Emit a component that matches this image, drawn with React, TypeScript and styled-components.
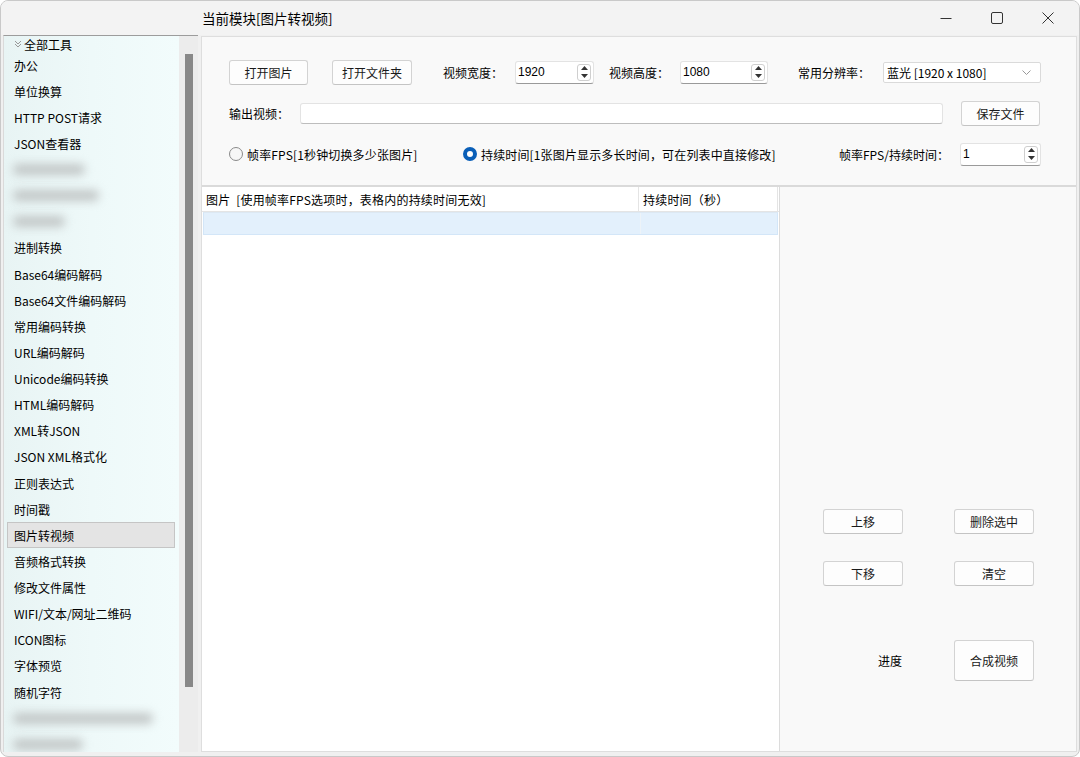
import styled, { createGlobalStyle } from "styled-components";

const GlobalStyle = createGlobalStyle`
  html, body {
    margin: 0;
    padding: 0;
    background: #ffffff;
  }
  body {
    font-family: "Noto Sans CJK SC", "Noto Sans", sans-serif;
    font-size: 12px;
    color: #000;
  }
`;

const Window = styled.div`
  width: 1078px;
  height: 755px;
  border: 1px solid #c9c9c9;
  border-radius: 8px;
  background: #f0f0f0;
  overflow: hidden;
  display: flex;
  flex-direction: column;
`;

const TitleBar = styled.div`
  height: 34px;
  flex: none;
  display: flex;
  align-items: center;
  background: #f3f3f3;
`;

const Title = styled.div`
  flex: 1;
  padding-left: 201px;
  font-size: 13.5px;
  line-height: 34px;
`;

const WinButton = styled.div`
  width: 51px;
  height: 34px;
  display: flex;
  align-items: center;
  justify-content: center;
`;

const Body = styled.div`
  flex: 1;
  display: flex;
  min-height: 0;
  padding: 0 2px 4px 2px;
`;

const Sidebar = styled.div`
  width: 194px;
  flex: none;
  display: flex;
  border-top: 1px solid #9c9c9c;
  border-left: 1px solid #dadada;
  overflow: hidden;
`;

const List = styled.div`
  flex: 1;
  padding: 0 3px 0 3px;
  background: linear-gradient(90deg, #e8f4f4 0%, #eef9f9 50%, #f2fcfc 100%);
  overflow: hidden;
`;

const TreeHeader = styled.div`
  height: 16px;
  display: flex;
  align-items: center;
  gap: 2px;
  padding-left: 7px;
  font-size: 12px;
`;

const Item = styled.div<{ $selected?: boolean }>`
  height: 26.125px;
  box-sizing: border-box;
  display: flex;
  align-items: center;
  padding-left: 6px;
  margin-right: 1px;
  white-space: nowrap;
  border: 1px solid ${(p) => (p.$selected ? "#c5c5c5" : "transparent")};
  background: ${(p) => (p.$selected ? "#e4e4e4" : "transparent")};
`;

const BlurredItem = styled.div<{ $w: number }>`
  height: 26.125px;
  display: flex;
  align-items: center;
  padding-left: 6px;
  & > span {
    display: block;
    width: ${(p) => p.$w}px;
    height: 11px;
    border-radius: 5px;
    background: #c2c7c7;
    filter: blur(5px);
  }
`;

const ScrollTrack = styled.div`
  width: 19px;
  flex: none;
  background: #ececec;
  padding-top: 18px;
  display: flex;
  justify-content: center;
`;

const ScrollThumb = styled.div`
  width: 8px;
  height: 633px;
  background: #888888;
`;

const Main = styled.div`
  flex: 1;
  margin-left: 3px;
  margin-top: 1px;
  border: 1px solid #dedede;
  background: #f9f9f9;
  display: flex;
  flex-direction: column;
  min-width: 0;
`;

const Controls = styled.div`
  height: 150px;
  flex: none;
  box-sizing: border-box;
  padding: 23px 0 0 27px;
  display: flex;
  flex-direction: column;
  gap: 17px;
  border-bottom: 2px solid #dadada;
`;

const Row = styled.div`
  height: 24px;
  display: flex;
  align-items: center;
`;

const Button = styled.button<{ $w?: number; $h?: number; $ml?: number }>`
  width: ${(p) => p.$w ?? 80}px;
  height: ${(p) => p.$h ?? 25}px;
  margin-left: ${(p) => p.$ml ?? 0}px;
  flex: none;
  font-family: inherit;
  font-size: 12px;
  color: #1a1a1a;
  background: #fdfdfd;
  border: 1px solid #d3d3d3;
  border-bottom-color: #c4c4c4;
  border-radius: 3px;
  padding: 0;
`;

const Label = styled.span<{ $w: number; $ml?: number }>`
  width: ${(p) => p.$w}px;
  margin-left: ${(p) => p.$ml ?? 0}px;
  flex: none;
  white-space: nowrap;
`;

const SpinBox = styled.div<{ $w: number; $ml?: number }>`
  width: ${(p) => p.$w}px;
  margin-left: ${(p) => p.$ml ?? 0}px;
  height: 23px;
  box-sizing: border-box;
  flex: none;
  display: flex;
  align-items: center;
  background: #fff;
  border: 1px solid #e3e3e3;
  border-bottom: 1px solid #9a9a9a;
  border-radius: 3px;
  padding-left: 2px;
  font-family: "Liberation Sans", "Noto Sans", sans-serif;
  font-size: 12px;
`;

const SpinValue = styled.span`
  flex: 1;
`;

const SpinArrows = styled.div`
  width: 14px;
  height: 17px;
  margin-right: 2px;
  box-sizing: border-box;
  border: 1px solid #cfcfcf;
  border-radius: 3px;
  display: flex;
  flex-direction: column;
  align-items: center;
  justify-content: space-around;
`;

const Select = styled.div`
  width: 158px;
  height: 21px;
  box-sizing: border-box;
  flex: none;
  display: flex;
  align-items: center;
  justify-content: space-between;
  padding: 0 9px 0 3px;
  background: #fff;
  border: 1px solid #dadada;
  border-radius: 2px;
  font-size: 12px;
`;

const TextInput = styled.div<{ $w: number }>`
  width: ${(p) => p.$w}px;
  height: 21px;
  box-sizing: border-box;
  flex: none;
  background: #fff;
  border: 1px solid #e3e3e3;
  border-bottom: 1px solid #bdbdbd;
  border-radius: 3px;
`;

const RadioLabel = styled.label<{ $w: number }>`
  width: ${(p) => p.$w}px;
  display: flex;
  align-items: center;
  gap: 4px;
  white-space: nowrap;
  flex: none;
  letter-spacing: 0.15px;
`;

const RadioDot = styled.span<{ $checked?: boolean }>`
  width: 14px;
  height: 14px;
  box-sizing: border-box;
  border-radius: 50%;
  flex: none;
  background: ${(p) => (p.$checked ? "#fff" : "#f7f7f7")};
  border: ${(p) => (p.$checked ? "4px solid #0a5fb8" : "1px solid #8a8a8a")};
`;

const Lower = styled.div`
  flex: 1;
  display: flex;
  min-height: 0;
`;

const Table = styled.div`
  width: 577px;
  flex: none;
  background: #fff;
  border-right: 1px solid #dcdcdc;
  display: flex;
  flex-direction: column;
`;

const HeaderRow = styled.div`
  height: 24px;
  flex: none;
  display: flex;
  border-bottom: 1px solid #e4e4e4;
`;

const HeaderCell = styled.div<{ $w: number }>`
  width: ${(p) => p.$w}px;
  flex: none;
  box-sizing: border-box;
  padding-left: 4px;
  display: flex;
  align-items: center;
  border-right: 1px solid #e4e4e4;
  white-space: pre;
  letter-spacing: 0.2px;
`;

const DataRow = styled.div`
  height: 23px;
  margin: 0 1px;
  box-sizing: border-box;
  display: flex;
  background: #e3f0fc;
  border: 1px solid #d3e6f8;
  border-top-color: #dce8f3;
`;

const DataCell = styled.div<{ $w: number }>`
  width: ${(p) => p.$w}px;
  flex: none;
  border-right: 1px solid #edf3f8;
`;

const SidePanel = styled.div`
  flex: 1;
  box-sizing: border-box;
  padding: 322px 0 0 43px;
  display: grid;
  grid-template-columns: 80px 80px;
  grid-template-rows: 25px 25px 0 41px;
  column-gap: 51px;
  row-gap: 27px;
  align-content: start;
  align-items: center;
`;

const ProgressLabel = styled.span`
  grid-row: 4;
  text-align: right;
  padding-right: 1px;
`;

const BigButton = styled(Button)`
  grid-row: 4;
`;

const sidebarItems: (string | number)[] = [
  "办公",
  "单位换算",
  "HTTP POST请求",
  "JSON查看器",
  72,
  86,
  52,
  "进制转换",
  "Base64编码解码",
  "Base64文件编码解码",
  "常用编码转换",
  "URL编码解码",
  "Unicode编码转换",
  "HTML编码解码",
  "XML转JSON",
  "JSON XML格式化",
  "正则表达式",
  "时间戳",
  "图片转视频",
  "音频格式转换",
  "修改文件属性",
  "WIFI/文本/网址二维码",
  "ICON图标",
  "字体预览",
  "随机字符",
  140,
  70,
];

function Arrows() {
  return (
    <SpinArrows>
      <svg width="7" height="4" viewBox="0 0 7 4">
        <path d="M0 4 L3.5 0 L7 4 Z" fill="#333" />
      </svg>
      <svg width="7" height="4" viewBox="0 0 7 4">
        <path d="M0 0 L3.5 4 L7 0 Z" fill="#333" />
      </svg>
    </SpinArrows>
  );
}

export default function App() {
  return (
    <>
      <GlobalStyle />
      <Window>
        <TitleBar>
          <Title>当前模块[图片转视频]</Title>
          <WinButton>
            <svg width="12" height="12" viewBox="0 0 12 12">
              <path d="M0.5 6.5 H11.5" stroke="#333" strokeWidth="1" />
            </svg>
          </WinButton>
          <WinButton>
            <svg width="12" height="12" viewBox="0 0 12 12">
              <rect x="0.5" y="0.5" width="11" height="11" rx="1.5" fill="none" stroke="#333" strokeWidth="1" />
            </svg>
          </WinButton>
          <WinButton>
            <svg width="12" height="12" viewBox="0 0 12 12">
              <path d="M0.5 0.5 L11.5 11.5 M11.5 0.5 L0.5 11.5" stroke="#333" strokeWidth="1" />
            </svg>
          </WinButton>
          <span style={{ width: 6 }} />
        </TitleBar>
        <Body>
          <Sidebar>
            <List>
              <TreeHeader>
                <svg width="8" height="8" viewBox="0 0 8 8">
                  <path d="M1 1 L4 4 L7 1 M1 4 L4 7 L7 4" fill="none" stroke="#999" strokeWidth="1" />
                </svg>
                全部工具
              </TreeHeader>
              {sidebarItems.map((it, i) =>
                typeof it === "number" ? (
                  <BlurredItem key={i} $w={it}>
                    <span />
                  </BlurredItem>
                ) : (
                  <Item key={i} $selected={it === "图片转视频"}>
                    {it}
                  </Item>
                )
              )}
            </List>
            <ScrollTrack>
              <ScrollThumb />
            </ScrollTrack>
          </Sidebar>
          <Main>
            <Controls>
              <Row>
                <Button $w={79}>打开图片</Button>
                <Button $w={80} $ml={24}>打开文件夹</Button>
                <Label $w={72} $ml={31}>视频宽度：</Label>
                <SpinBox $w={79}>
                  <SpinValue>1920</SpinValue>
                  <Arrows />
                </SpinBox>
                <Label $w={71} $ml={15}>视频高度：</Label>
                <SpinBox $w={88}>
                  <SpinValue>1080</SpinValue>
                  <Arrows />
                </SpinBox>
                <Label $w={85} $ml={30}>常用分辨率：</Label>
                <Select>
                  <span>蓝光 [1920 x 1080]</span>
                  <svg width="9" height="5" viewBox="0 0 9 5">
                    <path d="M0.5 0.5 L4.5 4.5 L8.5 0.5" fill="none" stroke="#999" strokeWidth="1" />
                  </svg>
                </Select>
              </Row>
              <Row>
                <Label $w={71}>输出视频：</Label>
                <TextInput $w={643} />
                <Button $w={79} $ml={18}>保存文件</Button>
              </Row>
              <Row>
                <RadioLabel $w={234}>
                  <RadioDot />
                  帧率FPS[1秒钟切换多少张图片]
                </RadioLabel>
                <RadioLabel $w={376}>
                  <RadioDot $checked />
                  持续时间[1张图片显示多长时间，可在列表中直接修改]
                </RadioLabel>
                <Label $w={121}>帧率FPS/持续时间：</Label>
                <SpinBox $w={81}>
                  <SpinValue>1</SpinValue>
                  <Arrows />
                </SpinBox>
              </Row>
            </Controls>
            <Lower>
              <Table>
                <HeaderRow>
                  <HeaderCell $w={437}>{"图片  [使用帧率FPS选项时，表格内的持续时间无效]"}</HeaderCell>
                  <HeaderCell $w={139}>持续时间（秒）</HeaderCell>
                </HeaderRow>
                <DataRow>
                  <DataCell $w={436} />
                </DataRow>
              </Table>
              <SidePanel>
                <Button $w={80}>上移</Button>
                <Button $w={80}>删除选中</Button>
                <Button $w={80}>下移</Button>
                <Button $w={80}>清空</Button>
                <ProgressLabel>进度</ProgressLabel>
                <BigButton $w={80} $h={41}>合成视频</BigButton>
              </SidePanel>
            </Lower>
          </Main>
        </Body>
      </Window>
    </>
  );
}
